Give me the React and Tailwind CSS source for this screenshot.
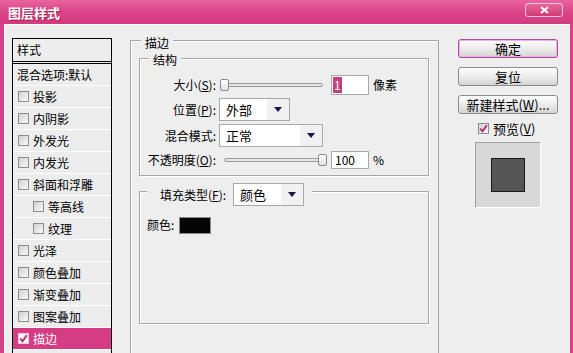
import React from 'react'

const font = "font-['Noto_Sans_CJK_SC','Liberation_Sans',sans-serif]"

function Check({ checked, light }) {
  return (
    <span className={`flex items-center justify-center w-[11px] h-[11px] shrink-0 border ${light ? 'border-[#f1c6da] bg-[#f4f4f4]' : 'border-[#8e8e8e] bg-linear-to-br from-[#d0d0d0] to-[#fafafa]'}`}>
      {checked && (
        <svg width="9" height="9" viewBox="0 0 9 9">
          <path d="M1.2 4.6 L3.6 7.2 L7.8 1.2" stroke="#b4306c" strokeWidth="2" fill="none" />
        </svg>
      )}
    </span>
  )
}

function Slider({ thumbRight }) {
  return (
    <div className="relative w-[103px] h-[14px] flex items-center">
      <div className="w-full h-[4px] rounded-full border border-[#9b9b9b] bg-[#e6e6e6]" />
      <div className={`absolute top-[1px] w-[9px] h-[12px] rounded-[2px] border border-[#8a8a8a] bg-linear-to-b from-white to-[#e2e2e2] ${thumbRight ? 'right-0' : 'left-0'}`} />
    </div>
  )
}

function Select({ value, className }) {
  return (
    <div className={`flex h-full border border-[#a9a9a9] bg-white ${className}`}>
      <span className="flex-1 flex items-center pl-[6px] text-[13px] leading-none">{value}</span>
      <span className="w-[22px] bg-[#f1f1f1] flex items-center justify-center">
        <svg width="8" height="5" viewBox="0 0 8 5">
          <path d="M0 0 H8 L4 5 Z" fill="#17174a" />
        </svg>
      </span>
    </div>
  )
}

function Btn({ children, main }) {
  return (
    <div className={`h-[19px] w-[100px] flex items-center justify-center rounded-[3px] border bg-linear-to-b from-[#fefefe] via-[#ececec] to-[#d4d4d4] text-[13px] leading-none ${main ? 'border-[#b14a9e] shadow-[inset_0_0_0_1px_#e9b3df]' : 'border-[#8b8b8b]'}`}>
      {children}
    </div>
  )
}

const items = [
  { label: '投影' },
  { label: '内阴影' },
  { label: '外发光' },
  { label: '内发光' },
  { label: '斜面和浮雕' },
  { label: '等高线', sub: true },
  { label: '纹理', sub: true },
  { label: '光泽' },
  { label: '颜色叠加' },
  { label: '渐变叠加' },
  { label: '图案叠加' },
  { label: '描边', active: true },
]

export default function App() {
  return (
    <div className={`w-[573px] h-[353px] overflow-hidden flex flex-col bg-[#d8418a] text-black text-[12px] ${font}`}>
      {/* title bar */}
      <div className="h-[24px] shrink-0 flex items-center justify-between bg-linear-to-b from-[#e9649f] via-[#db4388] to-[#d43a80]">
        <span className="pl-[8px] text-white font-bold text-[13px] leading-none [text-shadow:1px_1px_1px_rgba(80,0,30,0.5)]">图层样式</span>
        <div className="mr-[10px] mb-[4px] w-[38px] h-[14px] rounded-[3px] border border-[#f6c4d8] bg-linear-to-b from-[#e5679a] to-[#cf3a76] flex items-center justify-center">
          <svg width="9" height="8" viewBox="0 0 9 8">
            <path d="M1 1 L8 7 M8 1 L1 7" stroke="#fff" strokeWidth="2" />
          </svg>
        </div>
      </div>

      {/* body */}
      <div className="flex-1 ml-[4px] mr-[3px] bg-[#eeeeee] border-l border-t border-white pl-[7px] pt-[13px] flex items-start">
        {/* style list */}
        <div className="w-[100px] h-[330px] border border-black bg-[#ededed] shrink-0">
          <div className="h-[25px] border-b-[3px] border-double border-black flex items-center pl-[4px]">样式</div>
          <div className="h-[22px] border-b border-white flex items-center pl-[4px]">混合选项:默认</div>
          {items.map((it, i) => (
            <div key={i} className={`h-[22px] border-b border-white flex items-center gap-[4px] ${it.sub ? 'pl-[20px]' : 'pl-[5px]'} ${it.active ? 'bg-[#d53c83] text-white' : ''}`}>
              <Check checked={it.active} light={it.active} />
              <span>{it.label}</span>
            </div>
          ))}
        </div>

        {/* stroke group */}
        <div className="relative ml-[18px] mt-[2px] w-[309px] h-[330px] border border-[#a6a6a6] shadow-[inset_1px_1px_0_#fff] pl-[8px] pt-[17px] shrink-0">
          <span className="absolute left-[10px] -top-[6px] px-[4px] bg-[#eeeeee] leading-[15px]">描边</span>

          {/* structure group */}
          <div className="relative w-[290px] h-[118px] border border-[#a6a6a6] shadow-[inset_1px_1px_0_#fff,1px_1px_0_#fff] pt-[16px]">
            <span className="absolute left-[9px] -top-[7px] px-[4px] bg-[#eeeeee] leading-[15px]">结构</span>

            <div className="h-[20px] flex items-center">
              <span className="w-[76px] text-right">大小(<u>S</u>):</span>
              <div className="ml-[4px]"><Slider /></div>
              <div className="ml-[8px] w-[38px] h-[20px] border border-[#a9a9a9] bg-white flex items-center pl-[1px]">
                <span className="bg-[#c1407d] text-white leading-[16px] px-[1px]">1</span>
              </div>
              <span className="ml-[4px]">像素</span>
            </div>

            <div className="h-[23px] mt-[3px] flex items-center">
              <span className="w-[76px] text-right">位置(<u>P</u>):</span>
              <Select value="外部" className="ml-[3px] w-[71px]" />
            </div>

            <div className="h-[23px] mt-[3px] flex items-center">
              <span className="w-[76px] text-right">混合模式:</span>
              <Select value="正常" className="ml-[3px] w-[104px]" />
            </div>

            <div className="h-[18px] mt-[4px] flex items-center">
              <span className="w-[76px] text-right">不透明度(<u>O</u>):</span>
              <div className="ml-[8px]"><Slider thumbRight /></div>
              <div className="ml-[4px] w-[38px] h-[18px] border border-[#a9a9a9] bg-white flex items-center pl-[3px]">100</div>
              <span className="ml-[4px]">%</span>
            </div>
          </div>

          {/* fill group */}
          <div className="relative mt-[15px] w-[290px] h-[133px] border border-[#a6a6a6] shadow-[inset_1px_1px_0_#fff,1px_1px_0_#fff] pt-[24px] pl-[7px]">
            <div className="absolute left-[7px] -top-[9px] h-[23px] flex items-center bg-[#eeeeee] pl-[13px] pr-[8px]">
              <span>填充类型(<u>F</u>):</span>
              <Select value="颜色" className="ml-[7px] w-[71px]" />
            </div>
            <div className="flex items-center">
              <span>颜色:</span>
              <div className="ml-[5px] w-[32px] h-[17px] border border-[#8a8a8a] bg-[#050505]" />
            </div>
          </div>
        </div>

        {/* buttons */}
        <div className="ml-[19px] mt-[1px] w-[100px] flex flex-col shrink-0">
          <Btn main>确定</Btn>
          <div className="mt-[9px]"><Btn>复位</Btn></div>
          <div className="mt-[9px]"><Btn>新建样式(<u>W</u>)...</Btn></div>
          <div className="mt-[8px] h-[13px] pl-[20px] flex items-center gap-[4px]">
            <Check checked />
            <span className="text-[13px] leading-none">预览(<u>V</u>)</span>
          </div>
          <div className="mt-[7px] ml-[17px] w-[66px] h-[66px] border border-t-[#a0a0a0] border-l-[#a0a0a0] border-r-white border-b-white bg-[#d8d8d8] flex items-center justify-center">
            <div className="w-[34px] h-[34px] border border-[#1a1a1a] bg-[#555555]" />
          </div>
        </div>
      </div>
    </div>
  )
}
